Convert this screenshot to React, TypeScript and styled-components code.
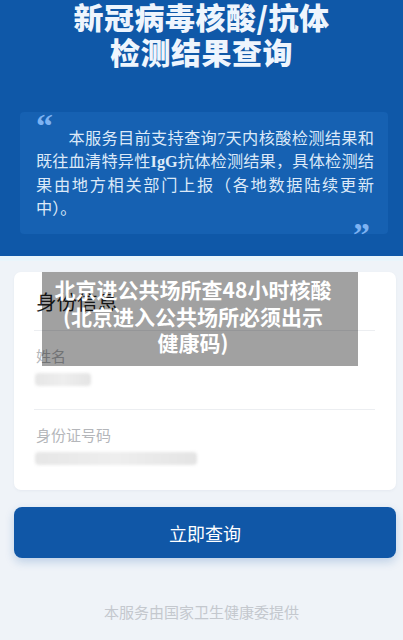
import React from "react";
import styled, { createGlobalStyle } from "styled-components";

const Global = createGlobalStyle`
  html, body { margin: 0; padding: 0; }
  body {
    background: #eef3f8;
    font-family: "Noto Sans CJK SC", "Noto Sans", sans-serif;
    width: 403px;
    overflow: hidden;
  }
`;

const Page = styled.div`
  position: relative;
  width: 403px;
  height: 640px;
  background: #eff3f8;
  display: flex;
  flex-direction: column;
`;

const Header = styled.header`
  background: #0f58a8;
  height: 261px;
  box-sizing: border-box;
  padding: 0 15px 0 20px;
  display: flex;
  flex-direction: column;
  align-items: stretch;
  border-bottom: 5px solid #e9f5fb;
`;

const Title = styled.h1`
  margin: 0 -15px 0 -20px;
  text-align: center;
  color: #eef5fd;
  font-size: 30px;
  font-weight: 900;
  line-height: 35px;
  letter-spacing: 0.5px;
  transform: translateY(-1px);
`;

const QuoteBox = styled.div`
  position: relative;
  margin-top: 42px;
  width: 368px;
  height: 122px;
  box-sizing: border-box;
  background: #1661b2;
  border-radius: 4px;
  padding: 16px 14px 0 16px;
`;

const QuoteMark = styled.span<{ $end?: boolean }>`
  position: absolute;
  font-family: "Liberation Serif", serif;
  font-weight: 700;
  font-size: 34px;
  line-height: 1;
  color: #7db2f2;
  ${(p) => (p.$end ? "right: 18px; bottom: -18px;" : "left: 16px; top: -3px;")}
`;

const QuoteText = styled.p`
  margin: 0;
  width: 338px;
  color: #dce9f8;
  font-family: "Liberation Serif", "Noto Sans CJK SC", serif;
  font-size: 16.2px;
  line-height: 23.3px;
  text-indent: 2em;
  text-align: justify;
  b { font-weight: 700; }
`;

const Body = styled.main`
  padding: 11px 7px 0 14px;
  display: flex;
  flex-direction: column;
`;

const Card = styled.section`
  background: #ffffff;
  border-radius: 7px;
  height: 218px;
  box-sizing: border-box;
  padding: 0 21px 0 20px;
  display: flex;
  flex-direction: column;
  box-shadow: 0 1px 3px rgba(30, 60, 100, 0.05);
`;

const CardTitle = styled.h2`
  margin: 0;
  height: 58px;
  display: flex;
  align-items: center;
  padding: 0 0 0 2px;
  font-size: 20.5px;
  font-weight: 400;
  color: #222;
  border-bottom: 1px solid #eceef1;
`;

const Field = styled.div<{ $last?: boolean }>`
  height: 80px;
  box-sizing: border-box;
  padding: 15px 0 0 2px;
  display: flex;
  flex-direction: column;
  gap: 7px;
  border-bottom: ${(p) => (p.$last ? "none" : "1px solid #eceef1")};
`;

const Label = styled.div`
  font-size: 15px;
  line-height: 20px;
  color: #b4b6ba;
`;

const Blur = styled.div<{ $w: number }>`
  width: ${(p) => p.$w}px;
  height: 13px;
  margin-left: -1px;
  background: linear-gradient(90deg, #e6e6e6, #eeeeee 50%, #e4e4e4);
  border-radius: 4px;
  filter: blur(1.5px);
`;

const Button = styled.button`
  margin-top: 17px;
  height: 51px;
  border: none;
  border-radius: 8px;
  background: #1057a7;
  color: #ffffff;
  font-family: "Noto Sans CJK SC", sans-serif;
  font-size: 18px;
  box-shadow: 0 4px 10px rgba(16, 87, 168, 0.22);
  cursor: pointer;
`;

const Footer = styled.footer`
  margin-top: 43px;
  text-align: center;
  font-size: 15px;
  color: #c4c8ce;
  padding-right: 7px;
`;

const Toast = styled.div`
  position: absolute;
  left: 42px;
  top: 272px;
  width: 316px;
  height: 94px;
  background: rgba(0, 0, 0, 0.37);
  color: #ffffff;
  font-size: 21px;
  font-weight: 700;
  line-height: 26.5px;
  text-align: center;
  box-sizing: border-box;
  padding: 4px 14px 0 0;
  span { display: block; }
`;

export default function App() {
  return (
    <>
      <Global />
      <Page>
        <Header>
          <Title>
            新冠病毒核酸/抗体
            <br />
            检测结果查询
          </Title>
          <QuoteBox>
            <QuoteMark>“</QuoteMark>
            <QuoteText>
              本服务目前支持查询7天内核酸检测结果和既往血清特异性<b>IgG</b>抗体检测结果，具体检测结果由地方相关部门上报（各地数据陆续更新中）。
            </QuoteText>
            <QuoteMark $end>”</QuoteMark>
          </QuoteBox>
        </Header>
        <Body>
          <Card>
            <CardTitle>身份信息</CardTitle>
            <Field>
              <Label>姓名</Label>
              <Blur $w={56} />
            </Field>
            <Field $last>
              <Label>身份证号码</Label>
              <Blur $w={162} />
            </Field>
          </Card>
          <Button>立即查询</Button>
          <Footer>本服务由国家卫生健康委提供</Footer>
        </Body>
        <Toast>
          <span>北京进公共场所查48小时核酸</span>
          <span>(北京进入公共场所必须出示</span>
          <span>健康码)</span>
        </Toast>
      </Page>
    </>
  );
}
